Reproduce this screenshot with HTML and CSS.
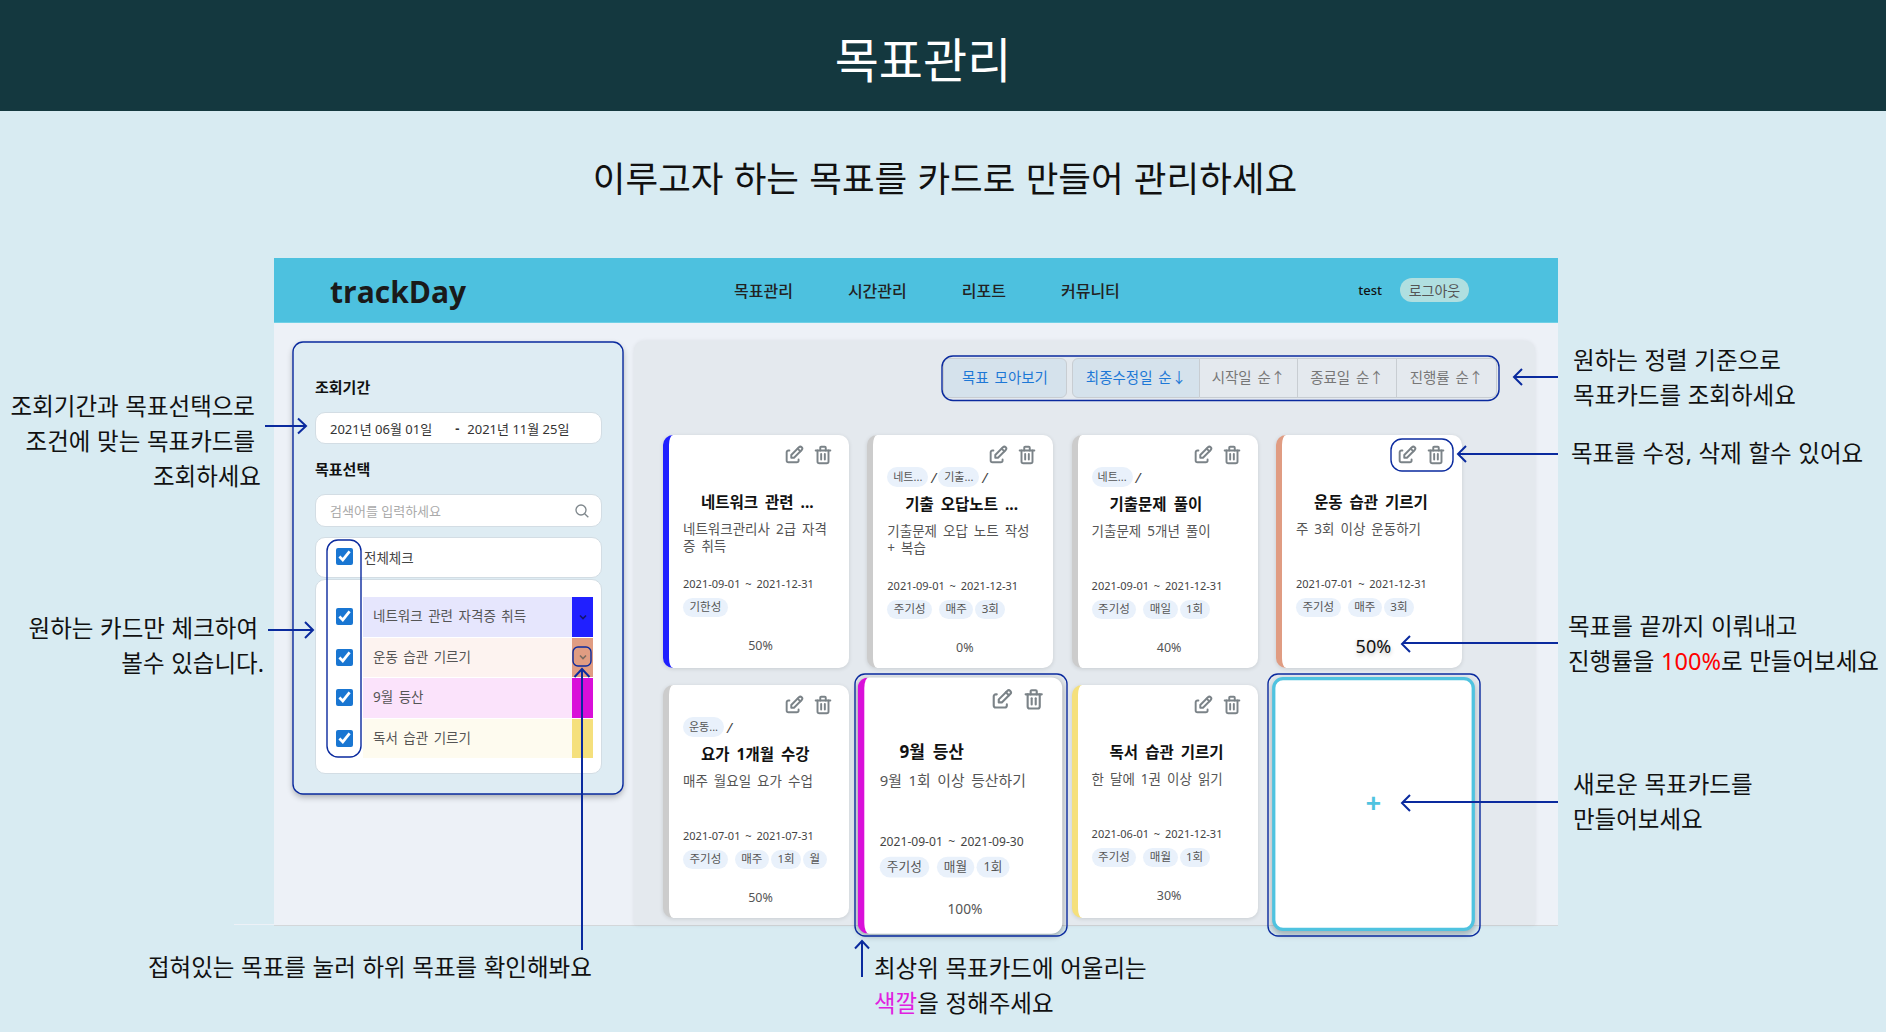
FILE: index.html
```html
<!DOCTYPE html>
<html lang="ko">
<head>
  <meta charset="UTF-8" />
  <title>목표관리</title>
  <link rel="stylesheet" href="styles.css">
</head>
<body>
  <svg class="icon-defs" width="0" height="0">
    <symbol id="i-edit" viewBox="0 0 24 24">
      <path d="M7 7h-1a2 2 0 0 0 -2 2v9a2 2 0 0 0 2 2h9a2 2 0 0 0 2 -2v-1" />
      <path d="M20.4 6.6a2.1 2.1 0 0 0 -3 -3l-8.4 8.4v3h3l8.4 -8.4z" />
      <path d="M16 5l3 3" />
    </symbol>
    <symbol id="i-trash" viewBox="0 0 24 24">
      <path d="M4 7h16" />
      <path d="M10 11v6" />
      <path d="M14 11v6" />
      <path d="M6 7v12a2 2 0 0 0 2 2h8a2 2 0 0 0 2 -2v-12" />
      <path d="M9 7v-3a1 1 0 0 1 1 -1h4a1 1 0 0 1 1 1v3" />
    </symbol>
  </svg>

  <header class="page-head">목표관리</header>
  <h2 class="page-sub">이루고자 하는 목표를 카드로 만들어 관리하세요</h2>

  <div class="app">
    <div class="topbar">
      <div class="logo">trackDay</div>
      <nav class="nav">
        <a>목표관리</a>
        <a>시간관리</a>
        <a>리포트</a>
        <a>커뮤니티</a>
      </nav>
      <div class="user">
        <span>test</span>
        <button class="logout">로그아웃</button>
      </div>
    </div>

    <div class="app-body">
      <aside class="sidebar">
        <div class="side-label first">조회기간</div>
        <div class="field date-field">
          <span>2021년 06월 01일</span>
          <span class="dash">-</span>
          <span>2021년 11월 25일</span>
        </div>
        <div class="side-label">목표선택</div>
        <div class="field search-field">
          <input type="text" placeholder="검색어를 입력하세요">
          <svg class="search-icon" viewBox="0 0 24 24"><circle cx="10.5" cy="10.5" r="7.5" /><path d="M16 16l5.500 5.500" /></svg>
        </div>
        <label class="check-all">
          <input type="checkbox" checked>
          <span>전체체크</span>
        </label>
        <div class="goal-list">
          <div class="goal-row">
            <input type="checkbox" checked>
            <div class="goal goal-blue">
              <span class="goal-name">네트워크 관련 자격증 취득</span>
              <span class="goal-color"><svg class="chev chev-dark" viewBox="0 0 12 12"><path d="M3 4.500l3 3 3-3" /></svg></span>
            </div>
          </div>
          <div class="goal-row">
            <input type="checkbox" checked>
            <div class="goal goal-orange">
              <span class="goal-name">운동 습관 기르기</span>
              <span class="goal-color"><svg class="chev" viewBox="0 0 12 12"><path d="M3 4.500l3 3 3-3" /></svg></span>
            </div>
          </div>
          <div class="goal-row">
            <input type="checkbox" checked>
            <div class="goal goal-pink">
              <span class="goal-name">9월 등산</span>
              <span class="goal-color"></span>
            </div>
          </div>
          <div class="goal-row">
            <input type="checkbox" checked>
            <div class="goal goal-yellow">
              <span class="goal-name">독서 습관 기르기</span>
              <span class="goal-color"></span>
            </div>
          </div>
        </div>
      </aside>

      <main class="board">
        <div class="sort-bar">
          <button class="sort-btn sort-all active">목표 모아보기</button>
          <div class="sort-group">
            <button class="sort-btn s1 active">최종수정일 순↓</button>
            <button class="sort-btn s2">시작일 순↑</button>
            <button class="sort-btn s3">종료일 순↑</button>
            <button class="sort-btn s4">진행률 순↑</button>
          </div>
        </div>

        <div class="cards">
          <article class="card bar-blue">
            <div class="card-tools">
              <svg class="tool"><use href="#i-edit" /></svg>
              <svg class="tool"><use href="#i-trash" /></svg>
            </div>
            <div class="parents empty"></div>
            <h3 class="card-title">네트워크 관련 ...</h3>
            <p class="card-desc">네트워크관리사 2급 자격<br>증 취득</p>
            <div class="card-date">2021-09-01 ~ 2021-12-31</div>
            <div class="tags"><span class="tag kind">기한성</span></div>
            <div class="percent">50%</div>
          </article>

          <article class="card bar-grey">
            <div class="card-tools">
              <svg class="tool"><use href="#i-edit" /></svg>
              <svg class="tool"><use href="#i-trash" /></svg>
            </div>
            <div class="parents"><span class="parent">네트...</span><i>/</i><span class="parent">기출...</span><i>/</i></div>
            <h3 class="card-title">기출 오답노트 ...</h3>
            <p class="card-desc">기출문제 오답 노트 작성<br>+ 복습</p>
            <div class="card-date">2021-09-01 ~ 2021-12-31</div>
            <div class="tags"><span class="tag kind">주기성</span><span class="tag">매주</span><span class="tag">3회</span></div>
            <div class="percent">0%</div>
          </article>

          <article class="card bar-grey">
            <div class="card-tools">
              <svg class="tool"><use href="#i-edit" /></svg>
              <svg class="tool"><use href="#i-trash" /></svg>
            </div>
            <div class="parents"><span class="parent">네트...</span><i>/</i></div>
            <h3 class="card-title">기출문제 풀이</h3>
            <p class="card-desc">기출문제 5개년 풀이</p>
            <div class="card-date">2021-09-01 ~ 2021-12-31</div>
            <div class="tags"><span class="tag kind">주기성</span><span class="tag">매일</span><span class="tag">1회</span></div>
            <div class="percent">40%</div>
          </article>

          <article class="card bar-orange">
            <div class="card-tools">
              <svg class="tool"><use href="#i-edit" /></svg>
              <svg class="tool"><use href="#i-trash" /></svg>
            </div>
            <div class="parents empty"></div>
            <h3 class="card-title">운동 습관 기르기</h3>
            <p class="card-desc">주 3회 이상 운동하기</p>
            <div class="card-date">2021-07-01 ~ 2021-12-31</div>
            <div class="tags"><span class="tag kind">주기성</span><span class="tag">매주</span><span class="tag">3회</span></div>
            <div class="percent big">50%</div>
          </article>

          <article class="card bar-grey">
            <div class="card-tools">
              <svg class="tool"><use href="#i-edit" /></svg>
              <svg class="tool"><use href="#i-trash" /></svg>
            </div>
            <div class="parents"><span class="parent">운동...</span><i>/</i></div>
            <h3 class="card-title">요가 1개월 수강</h3>
            <p class="card-desc">매주 월요일 요가 수업</p>
            <div class="card-date">2021-07-01 ~ 2021-07-31</div>
            <div class="tags"><span class="tag kind">주기성</span><span class="tag">매주</span><span class="tag">1회</span><span class="tag">월</span></div>
            <div class="percent">50%</div>
          </article>

          <article class="card bar-pink lifted">
            <div class="card-tools">
              <svg class="tool"><use href="#i-edit" /></svg>
              <svg class="tool"><use href="#i-trash" /></svg>
            </div>
            <div class="parents empty"></div>
            <h3 class="card-title">9월 등산</h3>
            <p class="card-desc">9월 1회 이상 등산하기</p>
            <div class="card-date">2021-09-01 ~ 2021-09-30</div>
            <div class="tags"><span class="tag kind">주기성</span><span class="tag">매월</span><span class="tag">1회</span></div>
            <div class="percent">100%</div>
          </article>

          <article class="card bar-yellow">
            <div class="card-tools">
              <svg class="tool"><use href="#i-edit" /></svg>
              <svg class="tool"><use href="#i-trash" /></svg>
            </div>
            <div class="parents empty"></div>
            <h3 class="card-title">독서 습관 기르기</h3>
            <p class="card-desc">한 달에 1권 이상 읽기</p>
            <div class="card-date">2021-06-01 ~ 2021-12-31</div>
            <div class="tags"><span class="tag kind">주기성</span><span class="tag">매월</span><span class="tag">1회</span></div>
            <div class="percent">30%</div>
          </article>

          <button class="add-card">+</button>
        </div>
      </main>
    </div>
  </div>

  <!-- callouts drawn over the screenshot -->
  <svg class="marks" viewBox="0 0 1886 1032">
    <rect x="293" y="342" width="330" height="452" rx="10" />
    <rect x="327" y="540" width="34" height="217" rx="11" />
    <rect x="573" y="647" width="18" height="19" rx="5" />
    <rect x="942" y="356" width="557" height="44.500" rx="11" />
    <rect x="1391" y="439" width="62" height="32" rx="11" />
    <rect x="855" y="674" width="212" height="262" rx="10" />
    <rect x="1268" y="674" width="212" height="262" rx="10" />

    <path d="M265 426H305M298 418.500l8 7.500-8 7.500" />
    <path d="M268 630H312M305 622l8 8-8 8" />
    <path d="M582 950V670M574.500 677l7.500-8 7.500 8" />
    <path d="M1558 377H1515M1522 369l-8 8 8 8" />
    <path d="M1558 454H1459M1466 446l-8 8 8 8" />
    <path d="M1558 643H1403M1410 636l-8 8 8 8" />
    <path d="M1558 802H1403M1410 795l-8 8 8 8" />
    <path d="M862 977V942M855 948.500l7-7.500 7 7.500" />
  </svg>

  <p class="note n1"><span class="nudge">조회기간과 목표선택으로</span><span class="nudge">조건에 맞는 목표카드를</span><span>조회하세요</span></p>
  <p class="note n2"><span class="nudge">원하는 카드만 체크하여</span><span>볼수 있습니다.</span></p>
  <p class="note n3">접혀있는 목표를 눌러 하위 목표를 확인해봐요</p>
  <p class="note n4"><span>최상위 목표카드에 어울리는</span><span><b class="pink">색깔</b>을 정해주세요</span></p>
  <p class="note n5"><span>원하는 정렬 기준으로</span><span>목표카드를 조회하세요</span></p>
  <p class="note n6">목표를 수정, 삭제 할수 있어요</p>
  <p class="note n7"><span>목표를 끝까지 이뤄내고</span><span>진행률을 <b class="red">100%</b>로 만들어보세요</span></p>
  <p class="note n8"><span>새로운 목표카드를</span><span>만들어보세요</span></p>
</body>
</html>
```

FILE: styles.css
```css
* {
  margin: 0;
  padding: 0;
  box-sizing: border-box;
}

html, body {
  height: 1032px;
  overflow: hidden;
}

body {
  position: relative;
  font-family: "Noto Sans", "Noto Sans CJK KR", sans-serif;
  background: #d8ebf2;
  color: #111;
}

.icon-defs {
  position: absolute;
}

.page-head {
  height: 111px;
  padding-right: 40px;
  background: #14383f;
  color: #fff;
  font-size: 48px;
  line-height: 120px;
  text-align: center;
}

.page-sub {
  height: 147px;
  padding: 46px 0 0 4px;
  font-size: 35.500px;
  font-weight: 400;
  line-height: 42px;
  word-spacing: 1px;
  text-align: center;
  color: #111;
}

/* app screenshot */
.app {
  position: relative;
  width: 1284px;
  height: 668px;
  margin-left: 274px;
  background: #edf1f7;
  border-bottom: 1px solid #d3d7da;
}

.app::after {
  content: "";
  position: absolute;
  left: -40px;
  bottom: 0;
  width: 40px;
  height: 1px;
  background: #edf1f7;
}

.topbar {
  display: flex;
  align-items: center;
  height: 65px;
  padding: 0 89px 0 56px;
  background: #4dc1df;
  border-bottom: 1px solid #6fd0e6;
}

.logo {
  width: 404px;
  padding-top: 2px;
  font-family: "Open Sans", sans-serif;
  font-size: 30px;
  font-weight: 700;
  color: #1a1a1a;
}

.nav {
  display: flex;
  gap: 55px;
  font-size: 16px;
  font-weight: 500;
  color: #222;
}

.user {
  display: flex;
  align-items: center;
  gap: 18px;
  margin-left: auto;
  font-size: 13px;
  font-weight: 500;
}

.logout {
  width: 69px;
  height: 24px;
  border: none;
  border-radius: 12px;
  background: #b0dfe0;
  color: #555;
  font-family: inherit;
  font-size: 14px;
}

.app-body {
  display: grid;
  grid-template-columns: 330px 901px;
  column-gap: 11px;
  height: 602px;
  padding: 18px 0 0 19px;
}

/* left filter panel */
.sidebar {
  align-self: start;
  height: 452px;
  margin-top: 1px;
  padding: 35px 21px 0 22px;
  background: #deecf3;
  border-radius: 10px;
  box-shadow: 0 3px 6px rgba(0,0,0,0.3);
}

.side-label {
  height: 20px;
  margin: 15px 0;
  font-size: 15px;
  font-weight: 700;
  line-height: 20px;
}

.side-label.first {
  margin-top: 0;
}

.field {
  display: flex;
  align-items: center;
  height: 32px;
  background: #fff;
  border: 1px solid #d3dde4;
  border-radius: 10px;
}

.date-field {
  padding-left: 14px;
  font-size: 13px;
  color: #333;
}

.dash {
  margin: 0 8px 0 23px;
  font-weight: 700;
}

.search-field {
  height: 33px;
  padding: 0 11px 0 14px;
}

.search-field input {
  flex: 1;
  border: none;
  outline: none;
  font-family: inherit;
  font-size: 13px;
  background: transparent;
}

.search-field input::placeholder {
  color: #aaa;
}

.search-icon {
  width: 16px;
  height: 16px;
  fill: none;
  stroke: #7f878c;
  stroke-width: 2;
}

input[type="checkbox"] {
  flex: none;
  width: 17px;
  height: 17px;
  accent-color: #1976d2;
}

.check-all {
  display: flex;
  align-items: center;
  gap: 11px;
  height: 41px;
  margin-top: 10px;
  padding: 0 0 2px 20px;
  background: #fff;
  border: 1px solid #d3dde4;
  border-radius: 10px;
  font-size: 13.500px;
  color: #444;
}

.goal-list {
  height: 195px;
  margin-top: 1px;
  padding: 17px 8px 0 20px;
  background: #fff;
  border: 1px solid #d3dde4;
  border-radius: 10px;
}

.goal-row {
  display: flex;
  align-items: center;
  gap: 10px;
  height: 39.500px;
  margin-bottom: 1px;
}

.goal {
  flex: 1;
  display: flex;
  align-items: stretch;
  height: 100%;
  font-size: 13.500px;
  color: #555;
}

.goal-name {
  flex: 1;
  padding-left: 10px;
  line-height: 39px;
  word-spacing: 2px;
}

.goal-color {
  display: flex;
  align-items: center;
  justify-content: center;
  width: 21px;
}

.goal-blue { background: #e6e6fd; }
.goal-blue .goal-color { background: #2020ff; }
.goal-orange { background: #fdf3f0; }
.goal-orange .goal-color { background: #e09c82; }
.goal-pink { background: #fbe3fb; }
.goal-pink .goal-color { background: #d90fd9; }
.goal-yellow { background: #fefbef; }
.goal-yellow .goal-color { background: #f5e07c; }

.chev {
  width: 12px;
  height: 12px;
  fill: none;
  stroke: #7a6a60;
  stroke-width: 1.600;
}

.chev-dark {
  stroke: #14146e;
}

/* right board */
.board {
  background: #e4e9ee;
  border-radius: 10px 10px 0 0;
  box-shadow: 0 0 4px rgba(0,0,0,0.08);
  padding: 17px 0 0 29px;
}

.sort-bar {
  display: flex;
  justify-content: flex-end;
  gap: 5px;
  margin-right: 38px;
}

.sort-group {
  display: flex;
}

.sort-btn {
  height: 40px;
  padding-bottom: 3px;
  background: #e4e9ee;
  border: 1px solid #c8cdd2;
  color: #777;
  font-family: inherit;
  font-size: 14.500px;
  word-spacing: 2px;
}

.sort-btn + .sort-btn {
  border-left: none;
}

.sort-btn.active {
  background: #d5e2ec;
  color: #1d78d6;
}

.sort-all {
  width: 124px;
  border-radius: 6px;
}

.s1 { width: 128px; border-radius: 6px 0 0 6px; }
.s2 { width: 98px; }
.s3 { width: 99px; }
.s4 { width: 100px; border-radius: 0 6px 6px 0; }

.cards {
  display: grid;
  grid-template-columns: repeat(4, 186px);
  grid-auto-rows: 232.500px;
  column-gap: 18.300px;
  row-gap: 17.500px;
  margin-top: 37px;
}

.card {
  display: flex;
  flex-direction: column;
  padding: 9px 15px 0 14px;
  background: #fff;
  border-left: 6px solid #ccc;
  border-radius: 10px;
  box-shadow: 0 1px 4px rgba(0,0,0,0.12);
}

.bar-blue { border-left-color: #2020ff; }
.bar-grey { border-left-color: #cccccc; }
.bar-orange { border-left-color: #e09c82; }
.bar-pink { border-left-color: #d90fd9; }
.bar-yellow { border-left-color: #f5e07c; }

.lifted {
  transform: translateY(4px) scale(1.1);
  box-shadow: 0 2px 6px rgba(0,0,0,0.3);
  z-index: 1;
}

.card-tools {
  display: flex;
  justify-content: flex-end;
  gap: 7px;
  height: 22px;
}

.tool {
  width: 22px;
  height: 22px;
  fill: none;
  stroke: #7b8388;
  stroke-width: 2.100;
  stroke-linecap: round;
  stroke-linejoin: round;
}

.parents {
  display: flex;
  align-items: center;
  height: 20px;
  margin-top: 1px;
}

.parents.empty {
  height: 18px;
}

.parents i {
  margin: 0 1px 0 3px;
  width: 6px;
  font-size: 14px;
  color: #444;
}

.parent {
  display: inline-block;
  width: 41px;
  height: 20px;
  background: #e9f1fb;
  border-radius: 10px;
  font-size: 11px;
  line-height: 19px;
  text-align: center;
  color: #555;
}

.card-title {
  height: 22px;
  margin-top: 6px;
  padding-left: 18px;
  font-size: 15.500px;
  font-weight: 700;
  line-height: 22px;
  word-spacing: 3px;
  white-space: nowrap;
  color: #111;
}

.card-desc {
  height: 34px;
  margin-top: 8px;
  font-size: 13.500px;
  line-height: 17px;
  word-spacing: 2.500px;
  white-space: nowrap;
  color: #555;
}

.card-date {
  height: 18px;
  margin-top: 20px;
  font-size: 11px;
  line-height: 18px;
  word-spacing: 2px;
  color: #444;
}

.tags {
  display: flex;
  gap: 2px;
  margin-top: 5px;
}

.tag {
  height: 18.500px;
  padding: 0 6.500px;
  background: #e9f1fb;
  border-radius: 10px;
  font-size: 11.500px;
  line-height: 18px;
  color: #555;
}

.tag.kind {
  margin-right: 5px;
}

.percent {
  margin-top: 20px;
  padding-left: 4px;
  font-size: 12.500px;
  line-height: 18px;
  text-align: center;
  color: #555;
}

.percent.big {
  font-size: 18px;
  color: #111;
  text-shadow: 0 2px 4px rgba(0,0,0,0.25);
}

.add-card {
  transform: translate(4.500px, 2.500px) scale(1.09);
  background: #fff;
  border: 3px solid #4fc3e0;
  border-radius: 10px;
  box-shadow: 0 3px 6px rgba(0,0,0,0.25);
  color: #4fc3e0;
  font-family: "Liberation Sans", sans-serif;
  font-size: 24px;
  font-weight: 700;
  z-index: 1;
}

/* callouts */
.marks {
  position: absolute;
  top: 0;
  left: 0;
  width: 1886px;
  height: 1032px;
  fill: none;
  stroke: #0a2a9e;
  stroke-width: 2;
  z-index: 2;
}

.marks rect {
  stroke-width: 1.400;
}

.note {
  position: absolute;
  font-size: 23.500px;
  line-height: 35px;
  word-spacing: 0.500px;
  white-space: nowrap;
  color: #111;
  z-index: 3;
}

.note span {
  display: block;
}

.note b {
  font-weight: 400;
}

.note .pink { color: #e020e0; }
.note .red { color: #ff0000; }

.nudge {
  padding-right: 6px;
}

.n1, .n2 { text-align: right; }
.n1 { top: 389px; right: 1625px; }
.n2 { top: 611px; right: 1622px; }
.n3 { top: 950px; left: 148px; }
.n4 { top: 951px; left: 874px; }
.n5 { top: 343px; left: 1573px; }
.n6 { top: 436px; left: 1571px; }
.n7 { top: 609px; left: 1568px; }
.n8 { top: 767px; left: 1573px; }
```
